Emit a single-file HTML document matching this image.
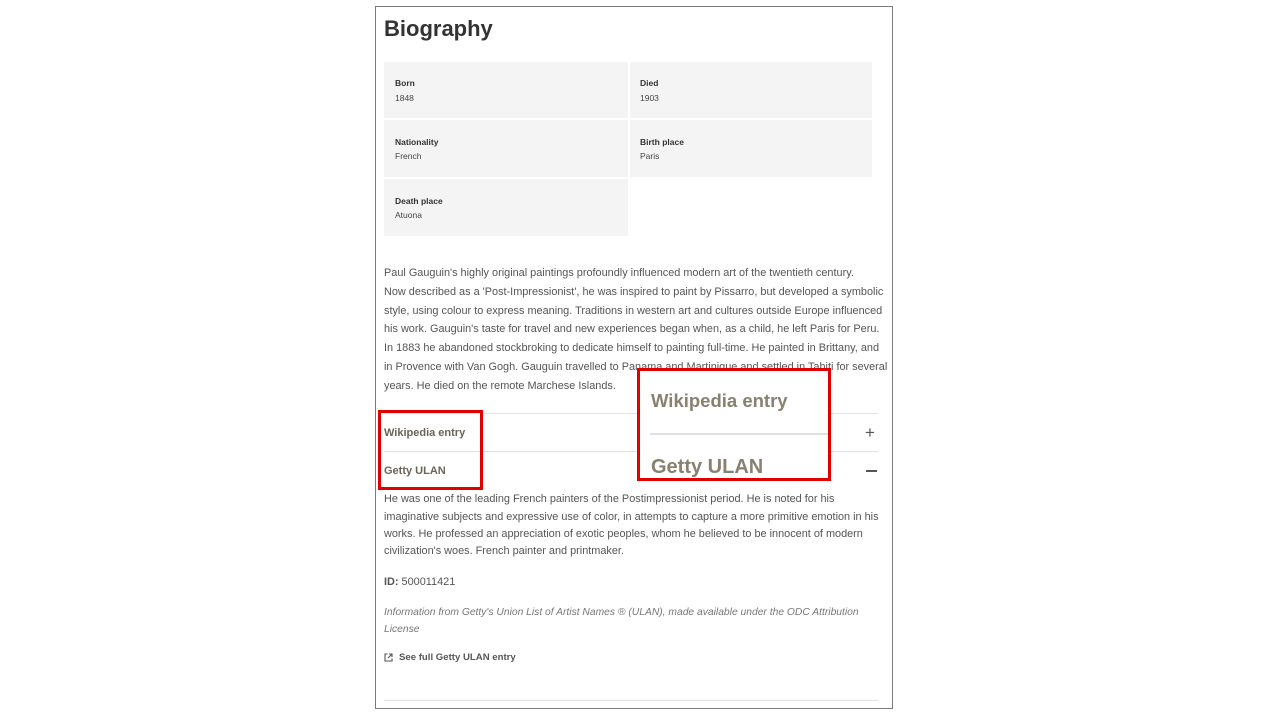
<!DOCTYPE html>
<html><head><meta charset="utf-8"><style>
body{margin:0;width:1280px;height:720px;background:#fff;position:relative;overflow:hidden;font-family:"Liberation Sans",sans-serif;}
.a{position:absolute;white-space:nowrap;}
.frame{position:absolute;left:375px;top:6px;width:516px;height:701px;border:1px solid #7a7a7a;}
.cell{position:absolute;background:#f4f4f4;}
.lab{font-size:8.5px;font-weight:bold;color:#333;}
.val{font-size:8.5px;color:#444;}
.p{font-size:10.9px;color:#555;line-height:12px;}
.hr{position:absolute;height:1px;background:#e2e2e2;}
.acc{font-size:11px;font-weight:bold;color:#6b6456;}
.red{position:absolute;border:3px solid #e00000;}
</style></head><body>
<div class="frame"></div>
<div class="a" style="left:384px;top:16px;font-size:22px;font-weight:bold;color:#333;">Biography</div>

<div class="cell" style="left:384px;top:62px;width:244px;height:56px"></div>
<div class="cell" style="left:630px;top:62px;width:242px;height:56px"></div>
<div class="cell" style="left:384px;top:120px;width:244px;height:57px"></div>
<div class="cell" style="left:630px;top:120px;width:242px;height:57px"></div>
<div class="cell" style="left:384px;top:179px;width:244px;height:57px"></div>

<div class="a lab" style="left:395px;top:78px">Born</div><div class="a val" style="left:395px;top:93px">1848</div>
<div class="a lab" style="left:640px;top:78px">Died</div><div class="a val" style="left:640px;top:93px">1903</div>
<div class="a lab" style="left:395px;top:137px">Nationality</div><div class="a val" style="left:395px;top:151px">French</div>
<div class="a lab" style="left:640px;top:137px">Birth place</div><div class="a val" style="left:640px;top:151px">Paris</div>
<div class="a lab" style="left:395px;top:196px">Death place</div><div class="a val" style="left:395px;top:210px">Atuona</div>

<div class="a p" style="left:384px;top:267px">Paul Gauguin's highly original paintings profoundly influenced modern art of the twentieth century.</div>
<div class="a p" style="left:384px;top:286px">Now described as a 'Post-Impressionist', he was inspired to paint by Pissarro, but developed a symbolic</div>
<div class="a p" style="left:384px;top:305px">style, using colour to express meaning. Traditions in western art and cultures outside Europe influenced</div>
<div class="a p" style="left:384px;top:323px">his work. Gauguin's taste for travel and new experiences began when, as a child, he left Paris for Peru.</div>
<div class="a p" style="left:384px;top:342px">In 1883 he abandoned stockbroking to dedicate himself to painting full-time. He painted in Brittany, and</div>
<div class="a p" style="left:384px;top:361px">in Provence with Van Gogh. Gauguin travelled to Panama and Martinique and settled in Tahiti for several</div>
<div class="a p" style="left:384px;top:380px">years. He died on the remote Marchese Islands.</div>

<div class="hr" style="left:384px;top:413px;width:494px"></div>
<div class="hr" style="left:384px;top:451px;width:494px"></div>
<div class="a acc" style="left:384px;top:427px">Wikipedia entry</div>
<div class="a acc" style="left:384px;top:465px">Getty ULAN</div>
<div class="a" style="left:865px;top:423px;font-size:17px;color:#555">+</div>
<div class="a" style="left:866px;top:470px;width:11px;height:1.5px;background:#555"></div>

<div class="a p" style="left:384px;top:493px">He was one of the leading French painters of the Postimpressionist period. He is noted for his</div>
<div class="a p" style="left:384px;top:511px">imaginative subjects and expressive use of color, in attempts to capture a more primitive emotion in his</div>
<div class="a p" style="left:384px;top:528px">works. He professed an appreciation of exotic peoples, whom he believed to be innocent of modern</div>
<div class="a p" style="left:384px;top:545px">civilization's woes. French painter and printmaker.</div>
<div class="a p" style="left:384px;top:576px"><b>ID:</b> 500011421</div>
<div class="a p" style="left:384px;top:607px;font-style:italic;color:#777;font-size:10.3px">Information from Getty's Union List of Artist Names ® (ULAN), made available under the ODC Attribution</div>
<div class="a p" style="left:384px;top:624px;font-style:italic;color:#777;font-size:10.3px">License</div>
<svg class="a" style="left:384px;top:653px" width="9" height="9" viewBox="0 0 9 9"><path d="M3.5 1H1v7h7V5.5M5 1h3v3M8 1L4 5" fill="none" stroke="#555" stroke-width="1.1"/></svg>
<div class="a acc" style="left:399px;top:652px;font-size:9.6px;color:#555">See full Getty ULAN entry</div>
<div class="hr" style="left:384px;top:700px;width:494px"></div>

<div class="a" style="left:640px;top:370px;width:188px;height:109px;background:#fff"></div>
<div class="a" style="left:651px;top:390px;font-size:18.5px;font-weight:bold;color:#8a8070">Wikipedia entry</div>
<div class="a" style="left:650px;top:433px;width:178px;height:2px;background:#e0e0e0"></div>
<div class="a" style="left:651px;top:456px;font-size:20px;font-weight:bold;color:#8a8070">Getty ULAN</div>
<div class="red" style="left:637px;top:368px;width:188px;height:107px"></div>
<div class="red" style="left:378px;top:410px;width:99px;height:74px"></div>
</body></html>
